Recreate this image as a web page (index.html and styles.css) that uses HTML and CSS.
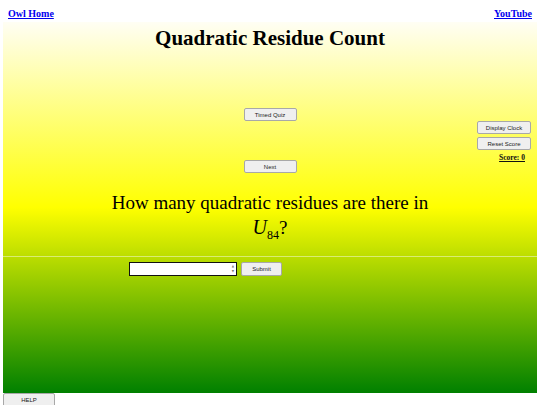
FILE: index.html
```html
<!DOCTYPE html>
<html lang="en-US">
<head>
    <meta charset="UTF-8">
    <meta name="viewport" content="width=device-width, initial-scale=1.0">
    <title>Quadratic Residue Count</title>
    <link rel="stylesheet" href="styles.css">
</head>
<body>
    <div class="top-links">
        <a href="#">Owl Home</a>
        <a href="#">YouTube</a>
    </div>

    <div class="main">
        <h1>Quadratic Residue Count</h1>

        <div class="quiz">
            <button class="btn center-btn">Timed Quiz</button>
            <div class="side">
                <button class="btn side-btn">Display Clock</button>
                <button class="btn side-btn">Reset Score</button>
                <a class="score" href="#">Score: 0</a>
            </div>
            <button class="btn center-btn next">Next</button>
        </div>

        <p class="question">
            How many quadratic residues are there in<br>
            <span class="math"><i>U</i><sub>84</sub></span>?
        </p>

        <hr class="divider">

        <div class="answer-row">
            <div class="num-box">
                <input type="text" class="answer">
                <span class="spin">&#9650;<br>&#9660;</span>
            </div>
            <button class="btn submit">Submit</button>
        </div>
    </div>

    <button class="btn help">HELP</button>
</body>
</html>
```

FILE: styles.css
```css
* {
    box-sizing: border-box;
}

body {
    margin: 0;
    font-family: "Liberation Serif", "Times New Roman", serif;
    color: #000;
    background: #fff;
}

.top-links {
    display: flex;
    justify-content: space-between;
    padding: 8px 8px 2px;
    height: 22px;
}

.top-links a {
    font-size: 10px;
    line-height: 12px;
    font-weight: bold;
    color: #0000ee;
}

.main {
    margin: 0 3px;
    height: 371px;
    background: linear-gradient(#fffef4, #ffff00 50%, #008000);
}

h1 {
    margin: 0;
    padding-top: 3px;
    font-size: 21px;
    line-height: 26px;
    text-align: center;
}

.btn {
    font-family: "Liberation Sans", Arial, sans-serif;
    font-size: 6px;
    color: #222;
    background: #efefef;
    border: 1px solid #a8a8a8;
    border-radius: 2px;
    height: 13px;
    padding: 0;
}

.quiz {
    display: grid;
    grid-template-columns: 1fr auto 1fr;
    row-gap: 39px;
    padding: 0 6px;
    margin-top: 57px;
}

.center-btn {
    grid-column: 2;
    width: 53px;
}

.next {
    grid-row: 2;
}

.side {
    grid-column: 3;
    grid-row: 1 / span 2;
    justify-self: end;
    align-self: start;
    margin-top: 13px;
    display: flex;
    flex-direction: column;
    align-items: flex-end;
    gap: 3px;
}

.side-btn {
    width: 54px;
}

.score {
    margin-right: 6px;
    font-size: 7.5px;
    line-height: 10px;
    font-weight: bold;
    color: #111;
}

.question {
    margin: 18px 0 0;
    font-size: 19px;
    line-height: 24px;
    text-align: center;
}

.math i {
    font-size: 20px;
}

.math sub {
    font-size: 12px;
    line-height: 0;
}

.divider {
    margin: 16px 0 5px;
    border: 0;
    border-top: 1px solid rgba(255, 255, 255, 0.45);
    height: 0;
}

.answer-row {
    display: flex;
    gap: 4px;
    padding-left: 126px;
}

.num-box {
    display: flex;
    width: 108px;
    height: 14px;
    background: #fff;
    border: 1.5px solid #111;
}

.answer {
    flex: 1;
    min-width: 0;
    border: 0;
    padding: 0;
    outline: none;
}

.spin {
    font-family: "DejaVu Sans", sans-serif;
    font-size: 3px;
    line-height: 4.5px;
    color: #777;
    padding: 1px 2px 0 0;
}

.submit {
    width: 41px;
    height: 14px;
}

.help {
    display: block;
    margin-left: 3px;
    width: 52px;
    height: 14px;
}
```
